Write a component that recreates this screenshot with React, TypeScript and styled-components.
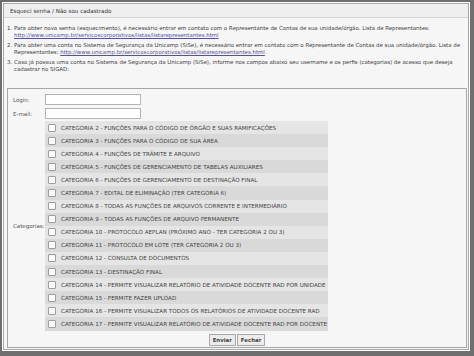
import styled, { createGlobalStyle } from 'styled-components';

const GlobalStyle = createGlobalStyle`
  html, body {
    margin: 0;
    padding: 0;
    background: #6f6f6f;
  }
  * {
    box-sizing: border-box;
  }
`;

const Frame = styled.div`
  width: 474px;
  height: 356px;
  padding: 2px 4px 5px 2px;
  background: #6f6f6f;
  font-family: "DejaVu Sans", Verdana, sans-serif;
  color: #3a3a3a;
`;

const Dialog = styled.div`
  height: 100%;
  display: flex;
  flex-direction: column;
  background: #f6f6f6;
  border: 1px solid #ffffff;
  box-shadow: inset 0 0 0 1px #a8a8a8;
  padding: 1px;
`;

const TitleBar = styled.div`
  height: 14px;
  display: flex;
  align-items: center;
  padding: 0 6px;
  background: #efefef;
  border-bottom: 1px solid #d4d4d4;
  font-size: 5.6px;
  color: #333;
`;

const Body = styled.div`
  flex: 1;
  display: flex;
  flex-direction: column;
  padding: 7px 1px 0 3px;
`;

const Steps = styled.ol`
  margin: 0;
  padding: 0 0 0 7px;
  font-size: 5.45px;
  line-height: 7px;
  color: #3c3c3c;
`;

const Step = styled.li`
  margin-bottom: 3px;
  white-space: nowrap;
`;

const RepLink = styled.a`
  color: #5450a8;
  text-decoration: underline;
`;

const FormBox = styled.div`
  margin-top: 12px;
  border: 1px solid #a6a6a6;
  padding: 4px 0 0 5px;
  display: grid;
  grid-template-columns: 32px auto;
  align-items: center;
`;

const Label = styled.span`
  font-size: 5.5px;
  color: #555;
`;

const FieldCell = styled.div`
  padding: 1px 0 2px;
`;

const TextInput = styled.input`
  display: block;
  width: 96px;
  height: 11px;
  margin: 0;
  padding: 0;
  border: 1px solid #b5b5b5;
  background: #fff;
`;

const CategoryList = styled.div`
  width: 283px;
  display: flex;
  flex-direction: column;
`;

const CategoryRow = styled.label<{ $alt: boolean }>`
  height: 13.1px;
  display: flex;
  align-items: center;
  gap: 5px;
  padding-left: 3px;
  background: ${({ $alt }) => ($alt ? '#d9d9d9' : '#e5e5e5')};
  font-size: 5.6px;
  color: #444;
  white-space: nowrap;
`;

const Box = styled.span`
  width: 8px;
  height: 8px;
  flex: none;
  border: 1px solid #9d9d9d;
  border-radius: 1px;
  background: #fbfbfb;
`;

const Actions = styled.div`
  grid-column: 1 / span 2;
  display: flex;
  justify-content: center;
  gap: 1px;
  padding: 3px 0 1px;
  margin-left: -5px;
`;

const Button = styled.button`
  height: 12px;
  padding: 0 3px;
  margin: 0;
  font-family: "DejaVu Sans", Verdana, sans-serif;
  font-size: 5.4px;
  font-weight: bold;
  color: #444;
  background: #ececec;
  border: 1px solid #a9a9a9;
  border-radius: 0;
`;

const LINK = 'http://www.unicamp.br/servicoscorporativos/listas/listarepresentantes.html';

const categories = [
  'CATEGORIA 2 - FUNÇÕES PARA O CÓDIGO DE ÓRGÃO E SUAS RAMIFICAÇÕES',
  'CATEGORIA 3 - FUNÇÕES PARA O CÓDIGO DE SUA ÁREA',
  'CATEGORIA 4 - FUNÇÕES DE TRÂMITE E ARQUIVO',
  'CATEGORIA 5 - FUNÇÕES DE GERENCIAMENTO DE TABELAS AUXILIARES',
  'CATEGORIA 6 - FUNÇÕES DE GERENCIAMENTO DE DESTINAÇÃO FINAL',
  'CATEGORIA 7 - EDITAL DE ELIMINAÇÃO (TER CATEGORIA 6)',
  'CATEGORIA 8 - TODAS AS FUNÇÕES DE ARQUIVOS CORRENTE E INTERMEDIÁRIO',
  'CATEGORIA 9 - TODAS AS FUNÇÕES DE ARQUIVO PERMANENTE',
  'CATEGORIA 10 - PROTOCOLO AEPLAN (PRÓXIMO ANO - TER CATEGORIA 2 OU 3)',
  'CATEGORIA 11 - PROTOCOLO EM LOTE (TER CATEGORIA 2 OU 3)',
  'CATEGORIA 12 - CONSULTA DE DOCUMENTOS',
  'CATEGORIA 13 - DESTINAÇÃO FINAL',
  'CATEGORIA 14 - PERMITE VISUALIZAR RELATÓRIO DE ATIVIDADE DOCENTE RAD POR UNIDADE',
  'CATEGORIA 15 - PERMITE FAZER UPLOAD',
  'CATEGORIA 16 - PERMITE VISUALIZAR TODOS OS RELATÓRIOS DE ATIVIDADE DOCENTE RAD',
  'CATEGORIA 17 - PERMITE VISUALIZAR RELATÓRIO DE ATIVIDADE DOCENTE RAD POR DOCENTE',
];

const App = () => (
  <>
    <GlobalStyle />
    <Frame>
      <Dialog>
        <TitleBar>Esqueci senha / Não sou cadastrado</TitleBar>
        <Body>
          <Steps>
            <Step>
              Para obter nova senha (esquecimento), é necessário entrar em contato com o Representante de Contas de sua unidade/órgão. Lista de Representantes:
              <br />
              <RepLink href="#">{LINK}</RepLink>
            </Step>
            <Step>
              Para obter uma conta no Sistema de Segurança da Unicamp (SiSe), é necessário entrar em contato com o Representante de Contas de sua unidade/órgão. Lista de
              <br />
              Representantes: <RepLink href="#">{LINK}</RepLink>
            </Step>
            <Step>
              Caso já possua uma conta no Sistema de Segurança da Unicamp (SiSe), informe nos campos abaixo seu username e os perfis (categorias) de acesso que deseja
              <br />
              cadastrar no SIGAD:
            </Step>
          </Steps>
          <FormBox>
            <Label>Login:</Label>
            <FieldCell>
              <TextInput type="text" />
            </FieldCell>
            <Label>E-mail:</Label>
            <FieldCell>
              <TextInput type="text" />
            </FieldCell>
            <Label>Categorias:</Label>
            <CategoryList>
              {categories.map((c, i) => (
                <CategoryRow key={c} $alt={i % 2 === 1}>
                  <Box />
                  {c}
                </CategoryRow>
              ))}
            </CategoryList>
            <Actions>
              <Button type="button">Enviar</Button>
              <Button type="button">Fechar</Button>
            </Actions>
          </FormBox>
        </Body>
      </Dialog>
    </Frame>
  </>
);

export default App;
